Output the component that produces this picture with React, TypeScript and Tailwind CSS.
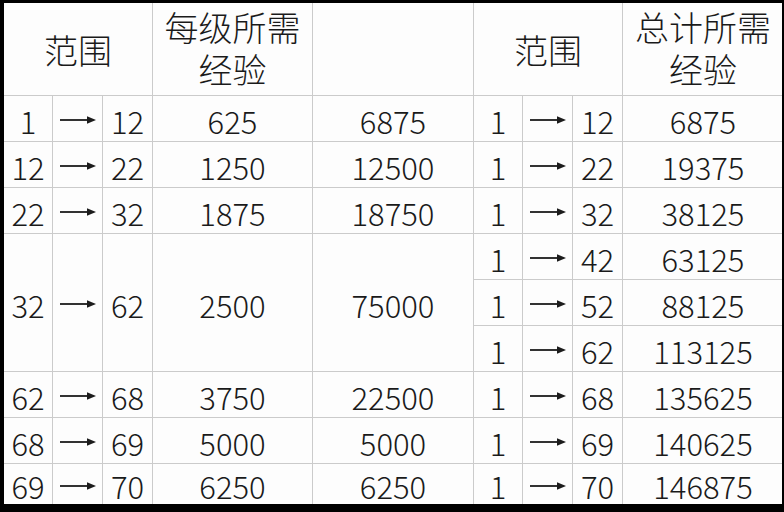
import React from "react";

// one row of the sheet: left block (range, each, sum) is optional for merged rows
type Row = {
  left?: { from: string; to: string; each: string; sum: string; tall?: boolean };
  to: string;
  total: string;
};

const rows: Row[] = [
  { left: { from: "1", to: "12", each: "625", sum: "6875" }, to: "12", total: "6875" },
  { left: { from: "12", to: "22", each: "1250", sum: "12500" }, to: "22", total: "19375" },
  { left: { from: "22", to: "32", each: "1875", sum: "18750" }, to: "32", total: "38125" },
  { left: { from: "32", to: "62", each: "2500", sum: "75000", tall: true }, to: "42", total: "63125" },
  { to: "52", total: "88125" },
  { to: "62", total: "113125" },
  { left: { from: "62", to: "68", each: "3750", sum: "22500" }, to: "68", total: "135625" },
  { left: { from: "68", to: "69", each: "5000", sum: "5000" }, to: "69", total: "140625" },
  { left: { from: "69", to: "70", each: "6250", sum: "6250" }, to: "70", total: "146875" },
];

const cell = "bg-[#fdfdfd] flex items-center justify-center";
const data = `${cell} leading-none pt-[3px]`;

function Arrow() {
  return (
    <svg width="36" height="10" viewBox="0 0 36 10" aria-label="→">
      <rect x="0" y="4.1" width="29" height="1.8" fill="#1c1c1c" />
      <path d="M27 1.2 L36 5 L27 8.8 Z" fill="#1c1c1c" />
    </svg>
  );
}

export default function App() {
  return (
    <div className="w-[784px] h-[512px] bg-black pl-[4px] pt-[3px] pr-[2px] pb-[8px]">
      <div className="w-full h-full overflow-hidden bg-[#fdfdfd]">
        <div className="grid gap-px bg-[#cbcbcb] text-[31px] text-[#1a1a1a] font-light font-['Noto_Sans_CJK_SC','Noto_Sans',sans-serif] grid-cols-[48px_49px_49px_159px_160px_48px_49px_49px_160px] grid-rows-[92px_repeat(8,45px)_40px]">
          <div className={`${cell} col-span-3 text-[34px]`}>范围</div>
          <div className={`${cell} flex-col text-[34px] leading-[42px] pb-[2px]`}>
            <span>每级所需</span>
            <span>经验</span>
          </div>
          <div className={cell} />
          <div className={`${cell} col-span-3 text-[34px]`}>范围</div>
          <div className={`${cell} flex-col text-[34px] leading-[42px] pb-[2px]`}>
            <span>总计所需</span>
            <span>经验</span>
          </div>

          {rows.map((r, i) => {
            const span = r.left?.tall ? "row-span-3" : "";
            return (
              <React.Fragment key={i}>
                {r.left && (
                  <>
                    <div className={`${data} ${span}`}>{r.left.from}</div>
                    <div className={`${data} ${span}`}><Arrow /></div>
                    <div className={`${data} ${span}`}>{r.left.to}</div>
                    <div className={`${data} ${span}`}>{r.left.each}</div>
                    <div className={`${data} ${span}`}>{r.left.sum}</div>
                  </>
                )}
                <div className={data}>1</div>
                <div className={data}><Arrow /></div>
                <div className={data}>{r.to}</div>
                <div className={data}>{r.total}</div>
              </React.Fragment>
            );
          })}
        </div>
      </div>
    </div>
  );
}
